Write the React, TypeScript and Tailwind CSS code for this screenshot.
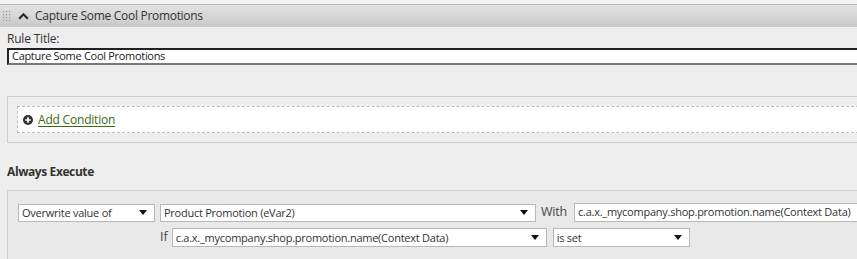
import React from 'react';

const font = { fontFamily: '"Open Sans", "Noto Sans", Arial, sans-serif' };

const Caret = () => (
    <svg width="8" height="5" viewBox="0 0 8 5" className="shrink-0">
        <path d="M0 0 H8 L4 5 Z" fill="#111" />
    </svg>
);

const Select: React.FC<{ label: string; className?: string; height?: string }> = ({ label, className = '', height = 'h-[18px]' }) => (
    <div className={`${height} ${className} bg-white border border-[#b8b8b8] flex items-center justify-between pl-[3px] pr-[7px] text-[11px] text-[#333] leading-none`}>
        <span className="tracking-[-0.25px]">{label}</span>
        <Caret />
    </div>
);

export default function App() {
    return (
        <div className="w-[857px] h-[259px] overflow-hidden bg-[#eeeeee] select-none" style={font}>
            <div className="w-[900px]">
                {/* Top strip */}
                <div className="h-[4px] bg-[#f3f3f3]"></div>

                {/* Header bar */}
                <div className="h-[23px] border-t border-[#b4b4b4] bg-gradient-to-b from-[#e3e3e3] to-[#c9c9c9] flex items-center">
                    <svg width="8" height="10" viewBox="0 0 8 10" className="ml-[3px]">
                        {[0, 1, 2].map(c => [0, 1, 2, 3].map(r => (
                            <rect key={`${c}-${r}`} x={c * 3} y={r * 3} width="1.2" height="1.2" fill="#9a9a9a" />
                        )))}
                    </svg>
                    <svg width="11" height="8" viewBox="0 0 11 8" className="ml-[7px]">
                        <path d="M1.2 6.8 L5.5 2.3 L9.8 6.8" fill="none" stroke="#2a2a2a" strokeWidth="2.2" />
                    </svg>
                    <span className="ml-[6px] text-[12px] text-[#333] tracking-[-0.3px]">Capture Some Cool Promotions</span>
                </div>

                <div className="pl-[7px]">
                    {/* Rule title */}
                    <div className="pt-[4px] text-[12px] text-[#333] leading-[16px] tracking-[-0.2px]">Rule Title:</div>
                    <div className="mt-[1px] h-[17px] bg-white border-2 border-t-[#222] border-l-[#222] border-b-[#7a7a7a] border-r-[#7a7a7a] flex items-center pl-[3px] text-[11px] text-[#222] tracking-[-0.3px]">
                        Capture Some Cool Promotions
                    </div>

                    {/* Conditions */}
                    <div className="mt-[31px] h-[47px] border border-[#cfcfcf] pl-[9px] pt-[9px]">
                        <div className="h-[27px] bg-white border border-dashed border-[#bdbdbd] flex items-center pl-[5px]">
                            <svg width="10" height="10" viewBox="0 0 10 10">
                                <circle cx="5" cy="5" r="5" fill="#333" />
                                <path d="M5 2.2 V7.8 M2.2 5 H7.8" stroke="#fff" strokeWidth="1.7" />
                            </svg>
                            <span className="ml-[5px] text-[12px] text-[#3b6a12] underline underline-offset-2 tracking-[-0.2px]">Add Condition</span>
                        </div>
                    </div>

                    {/* Always execute */}
                    <div className="mt-[21px] text-[12px] font-bold text-[#333] leading-[16px] tracking-[-0.4px]">Always Execute</div>
                    <div className="mt-[10px] h-[80px] border border-[#d2d2d2] bg-[#e9e9e9] pl-[10px] pt-[12px]">
                        <div className="flex items-center">
                            <Select label="Overwrite value of" className="w-[137px]" />
                            <Select label="Product Promotion (eVar2)" className="w-[376px] ml-[5px]" />
                            <span className="ml-[5px] text-[12.5px] text-[#444] tracking-[-0.2px]">With</span>
                            <div className="ml-[7px] w-[320px] h-[19px] bg-white border border-[#b8b8b8] flex items-center pl-[3px] text-[11px] text-[#333] tracking-[-0.25px]">
                                c.a.x._mycompany.shop.promotion.name(Context Data)
                            </div>
                        </div>
                        <div className="flex items-center mt-[6px] ml-[142px]">
                            <span className="text-[12.5px] text-[#444]">If</span>
                            <Select label="c.a.x._mycompany.shop.promotion.name(Context Data)" className="w-[375px] ml-[4px]" height="h-[19px]" />
                            <Select label="is set" className="w-[137px] ml-[6px]" height="h-[19px]" />
                        </div>
                    </div>
                </div>
            </div>
        </div>
    );
}
